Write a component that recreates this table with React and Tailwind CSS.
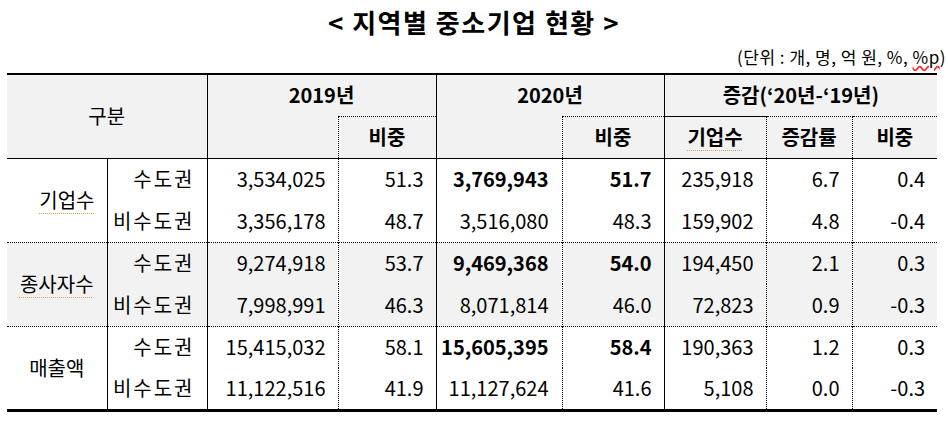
const FONT = { fontFamily: '"Noto Sans CJK KR", "Noto Sans", sans-serif' };

const groups = [
  {
    label: "기업수",
    spell: true,
    offset: true,
    grey: false,
    rows: [
      ["수도권", "3,534,025", "51.3", "3,769,943", "51.7", "235,918", "6.7", "0.4", true],
      ["비수도권", "3,356,178", "48.7", "3,516,080", "48.3", "159,902", "4.8", "-0.4", false],
    ],
  },
  {
    label: "종사자수",
    spell: true,
    grey: true,
    rows: [
      ["수도권", "9,274,918", "53.7", "9,469,368", "54.0", "194,450", "2.1", "0.3", true],
      ["비수도권", "7,998,991", "46.3", "8,071,814", "46.0", "72,823", "0.9", "-0.3", false],
    ],
  },
  {
    label: "매출액",
    grey: false,
    rows: [
      ["수도권", "15,415,032", "58.1", "15,605,395", "58.4", "190,363", "1.2", "0.3", true],
      ["비수도권", "11,122,516", "41.9", "11,127,624", "41.6", "5,108", "0.0", "-0.3", false],
    ],
  },
];

const spellLine =
  "underline decoration-dotted decoration-[#d9a04a] underline-offset-[5px] decoration-1";

export default function App() {
  return (
    <div className="w-[948px] h-[423px] bg-white text-black px-[7px]" style={FONT}>
      {/* Title */}
      <h1 className="pt-[5px] text-center text-[26px] leading-[34px] font-bold tracking-[1.5px]">
        &lt; 지역별 중소기업 현황 &gt;
      </h1>
      <p className="mt-[8px] -mr-[5px] text-right text-[17px] leading-[20px] tracking-[0.5px]">
        (단위 : 개, 명, 억 원, %, <span className="underline decoration-wavy decoration-red-500">%p</span>)
      </p>

      {/* Table */}
      <table className="mt-[6px] w-[930px] table-fixed border-collapse text-[20px] leading-none">
        <colgroup>
          <col className="w-[100px]" />
          <col className="w-[100px]" />
          <col className="w-[131px]" />
          <col className="w-[98px]" />
          <col className="w-[126px]" />
          <col className="w-[102px]" />
          <col className="w-[102px]" />
          <col className="w-[86px]" />
          <col className="w-[85px]" />
        </colgroup>
        <thead className="bg-[#f2f2f2]">
          <tr className="h-[42px] border-t-2 border-black">
            <td colSpan={2} rowSpan={2} className="text-center font-normal">
              구분
            </td>
            <td colSpan={2} className="border-l border-black text-center font-bold">
              2019년
            </td>
            <td colSpan={2} className="border-l border-black text-center font-bold">
              2020년
            </td>
            <td colSpan={3} className="border-l border-black text-center font-bold">
              증감(‘20년-‘19년)
            </td>
          </tr>
          <tr className="h-[42px]">
            <td className="border-l border-black" />
            <td className="border-l border-t border-dotted border-black text-center font-bold">
              비중
            </td>
            <td className="border-l border-black" />
            <td className="border-l border-t border-dotted border-black text-center font-bold">
              비중
            </td>
            <td className="border-l border-t border-black text-center font-bold">
              <span className={spellLine}>기업수</span>
            </td>
            <td className="border-l border-t border-dotted border-black text-center font-bold">
              증감률
            </td>
            <td className="border-l border-t border-dotted border-black text-center font-bold">
              비중
            </td>
          </tr>
        </thead>
        <tbody>
          {groups.map((g, gi) =>
            g.rows.map((r, ri) => {
              const [sub, a, b, c, d, e, f, h, bold] = r;
              const top =
                ri === 0
                  ? gi === 0
                    ? "border-t border-solid border-black"
                    : "border-t border-dotted border-black"
                  : "";
              const last = gi === groups.length - 1 && ri === 1;
              return (
                <tr
                  key={`${gi}-${ri}`}
                  className={`h-[42px] ${g.grey ? "bg-[#f2f2f2]" : ""} ${top} ${
                    last ? "border-b-[3px] border-b-black border-solid" : ""
                  }`}
                >
                  {ri === 0 && (
                    <td
                      rowSpan={2}
                      className={`align-middle ${g.offset ? "text-right pr-[12px]" : "text-center"}`}
                    >
                      <span className={g.spell ? spellLine : ""}>{g.label}</span>
                    </td>
                  )}
                  <td className="border-l border-solid border-black text-right pr-[12px] tracking-[2px]">
                    {sub}
                  </td>
                  <td className="border-l border-solid border-black text-right pr-[12px]">{a}</td>
                  <td className="border-l border-dotted border-black text-right pr-[12px]">{b}</td>
                  <td className={`border-l border-solid border-black text-right pr-[13px] ${bold ? "font-bold" : ""}`}>
                    {c}
                  </td>
                  <td className={`border-l border-dotted border-black text-right pr-[12px] ${bold ? "font-bold" : ""}`}>
                    {d}
                  </td>
                  <td className="border-l border-solid border-black text-right pr-[12px]">{e}</td>
                  <td className="border-l border-dotted border-black text-right pr-[12px]">{f}</td>
                  <td className="border-l border-dotted border-black text-right pr-[12px]">{h}</td>
                </tr>
              );
            })
          )}
        </tbody>
      </table>
    </div>
  );
}
